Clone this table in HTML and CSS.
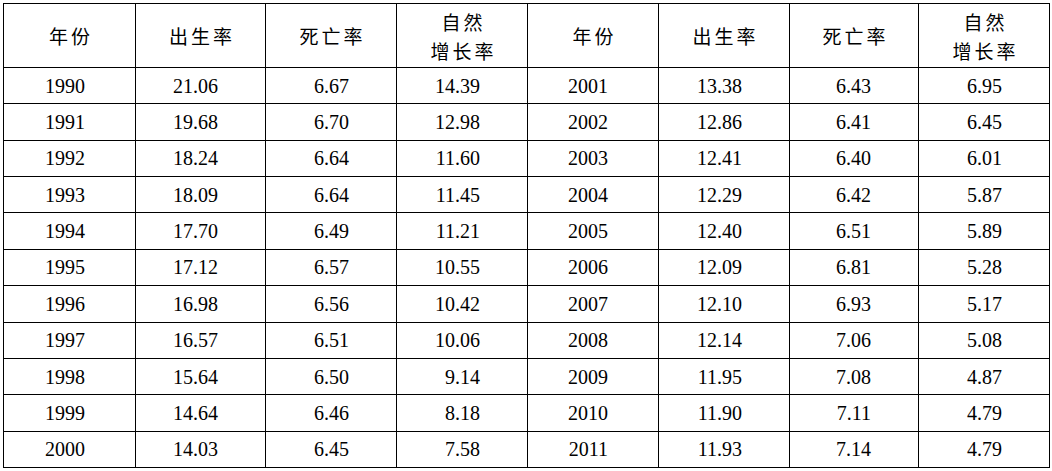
FILE: index.html
```html
<!DOCTYPE html>
<html lang="zh-CN">
<head>
<meta charset="utf-8">
<link rel="stylesheet" href="styles.css">
</head>
<body>
<div class="wrap">
<table class="data">
<colgroup>
<col class="c1"><col class="c2"><col class="c3"><col class="c4"><col class="c5"><col class="c6"><col class="c7"><col class="c8">
</colgroup>
<thead>
<tr>
<th>年份</th><th>出生率</th><th>死亡率</th><th><span class="two">自然<br>增长率</span></th>
<th>年份</th><th>出生率</th><th>死亡率</th><th><span class="two">自然<br>增长率</span></th>
</tr>
</thead>
<tbody>
<tr><td class="yr">1990</td><td>21.06</td><td>6.67</td><td>14.39</td><td class="yr">2001</td><td>13.38</td><td>6.43</td><td>6.95</td></tr>
<tr><td class="yr">1991</td><td>19.68</td><td>6.70</td><td>12.98</td><td class="yr">2002</td><td>12.86</td><td>6.41</td><td>6.45</td></tr>
<tr><td class="yr">1992</td><td>18.24</td><td>6.64</td><td>11.60</td><td class="yr">2003</td><td>12.41</td><td>6.40</td><td>6.01</td></tr>
<tr><td class="yr">1993</td><td>18.09</td><td>6.64</td><td>11.45</td><td class="yr">2004</td><td>12.29</td><td>6.42</td><td>5.87</td></tr>
<tr><td class="yr">1994</td><td>17.70</td><td>6.49</td><td>11.21</td><td class="yr">2005</td><td>12.40</td><td>6.51</td><td>5.89</td></tr>
<tr><td class="yr">1995</td><td>17.12</td><td>6.57</td><td>10.55</td><td class="yr">2006</td><td>12.09</td><td>6.81</td><td>5.28</td></tr>
<tr><td class="yr">1996</td><td>16.98</td><td>6.56</td><td>10.42</td><td class="yr">2007</td><td>12.10</td><td>6.93</td><td>5.17</td></tr>
<tr><td class="yr">1997</td><td>16.57</td><td>6.51</td><td>10.06</td><td class="yr">2008</td><td>12.14</td><td>7.06</td><td>5.08</td></tr>
<tr><td class="yr">1998</td><td>15.64</td><td>6.50</td><td>9.14</td><td class="yr">2009</td><td>11.95</td><td>7.08</td><td>4.87</td></tr>
<tr><td class="yr">1999</td><td>14.64</td><td>6.46</td><td>8.18</td><td class="yr">2010</td><td>11.90</td><td>7.11</td><td>4.79</td></tr>
<tr><td class="yr">2000</td><td>14.03</td><td>6.45</td><td>7.58</td><td class="yr">2011</td><td>11.93</td><td>7.14</td><td>4.79</td></tr>
</tbody>
</table>
</div>
</body>
</html>
```

FILE: styles.css
```css
html, body {
  margin: 0;
  padding: 0;
  background: #fff;
}
.wrap {
  padding: 3px 0 0 3px;
}
.data {
  border-collapse: collapse;
  table-layout: fixed;
  width: 1046px;
  color: #000;
}
.c1 { width: 132px; }
.c2 { width: 130px; }
.c3 { width: 131px; }
.c4 { width: 131px; }
.c5 { width: 131px; }
.c6 { width: 131px; }
.c7 { width: 129px; }
.c8 { width: 131px; }
.data th, .data td {
  border: 1px solid #000;
  padding: 0;
  vertical-align: middle;
}
.data th {
  height: 63px;
  font-family: "Noto Sans CJK SC", "Noto Sans", sans-serif;
  font-weight: normal;
  font-size: 19px;
  letter-spacing: 3px;
  line-height: 29px;
  text-align: center;
  padding-left: 3px;
}
.data td {
  height: 35.36px;
  font-family: "Liberation Serif", "Times New Roman", serif;
  font-size: 20px;
  line-height: 24px;
  text-align: right;
  padding-right: 47px;
}
.data td.yr {
  padding-right: 50px;
}
```
